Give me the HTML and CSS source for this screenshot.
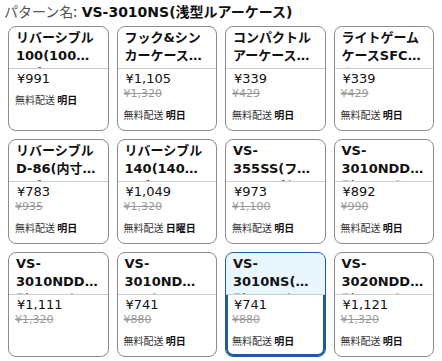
FILE: index.html
```html
<!DOCTYPE html>
<html lang="ja">
<head>
  <meta charset="UTF-8">
  <title>パターン選択</title>
  <link rel="stylesheet" href="styles.css">
</head>
<body>
  <div class="pattern-name">
    <span class="label">パターン名:</span>
    <span class="value">VS-3010NS(浅型ルアーケース)</span>
  </div>

  <div class="grid">
    <div class="card">
      <div class="card-title">リバーシブル100(100サイズ)</div>
      <div class="card-body">
        <div class="price">¥991</div>
        <div class="ship">無料配送 <b>明日</b></div>
      </div>
    </div>
    <div class="card">
      <div class="card-title">フック&amp;シンカーケースホワイト</div>
      <div class="card-body">
        <div class="price">¥1,105</div>
        <div class="list-price">¥1,320</div>
        <div class="ship">無料配送 <b>明日</b></div>
      </div>
    </div>
    <div class="card">
      <div class="card-title">コンパクトルアーケースホワイト</div>
      <div class="card-body">
        <div class="price">¥339</div>
        <div class="list-price">¥429</div>
        <div class="ship">無料配送 <b>明日</b></div>
      </div>
    </div>
    <div class="card">
      <div class="card-title">ライトゲームケースSFC ホワイト</div>
      <div class="card-body">
        <div class="price">¥339</div>
        <div class="list-price">¥429</div>
        <div class="ship">無料配送 <b>明日</b></div>
      </div>
    </div>

    <div class="card">
      <div class="card-title">リバーシブルD-86(内寸サイズ)</div>
      <div class="card-body">
        <div class="price">¥783</div>
        <div class="list-price">¥935</div>
        <div class="ship">無料配送 <b>明日</b></div>
      </div>
    </div>
    <div class="card">
      <div class="card-title">リバーシブル140(140サイズ)</div>
      <div class="card-body">
        <div class="price">¥1,049</div>
        <div class="list-price">¥1,320</div>
        <div class="ship">無料配送 <b>日曜日</b></div>
      </div>
    </div>
    <div class="card">
      <div class="card-title">VS-355SS(フィッシングケース)</div>
      <div class="card-body">
        <div class="price">¥973</div>
        <div class="list-price">¥1,100</div>
        <div class="ship">無料配送 <b>明日</b></div>
      </div>
    </div>
    <div class="card">
      <div class="card-title">VS-3010NDDM(深型ルアーケース)</div>
      <div class="card-body">
        <div class="price">¥892</div>
        <div class="list-price">¥990</div>
        <div class="ship">無料配送 <b>明日</b></div>
      </div>
    </div>

    <div class="card">
      <div class="card-title">VS-3010NDDM(深型ルアーケース)</div>
      <div class="card-body">
        <div class="price">¥1,111</div>
        <div class="list-price">¥1,320</div>
      </div>
    </div>
    <div class="card">
      <div class="card-title">VS-3010NDM(ルアーケース)</div>
      <div class="card-body">
        <div class="price">¥741</div>
        <div class="list-price">¥880</div>
        <div class="ship">無料配送 <b>明日</b></div>
      </div>
    </div>
    <div class="card selected">
      <div class="card-title">VS-3010NS(浅型ルアーケース)</div>
      <div class="card-body">
        <div class="price">¥741</div>
        <div class="list-price">¥880</div>
        <div class="ship">無料配送 <b>明日</b></div>
      </div>
    </div>
    <div class="card">
      <div class="card-title">VS-3020NDDM(深型ルアーケース)</div>
      <div class="card-body">
        <div class="price">¥1,121</div>
        <div class="list-price">¥1,320</div>
        <div class="ship">無料配送 <b>明日</b></div>
      </div>
    </div>
  </div>
</body>
</html>
```

FILE: styles.css
```css
body {
  margin: 0;
  padding: 0 4px;
  font-family: "DejaVu Sans", "Noto Sans CJK JP", sans-serif;
  color: #111;
  background-color: #fff;
}
.pattern-name {
  font-size: 14px;
  line-height: 22px;
  margin-bottom: 3px;
  white-space: nowrap;
}
.pattern-name .label {
  color: #555;
  font-family: "Noto Sans CJK JP", sans-serif;
}
.pattern-name .value {
  font-weight: bold;
}
.grid {
  display: grid;
  grid-template-columns: repeat(4, 1fr);
  column-gap: 8px;
  row-gap: 8px;
  padding: 0 4px;
}
.card {
  border: 1px solid #8c8c8c;
  border-radius: 8px;
  overflow: hidden;
  display: flex;
  flex-direction: column;
  height: 105px;
  box-sizing: border-box;
}
.card-title {
  padding: 2px 8px 3px 7px;
  border-bottom: 1px solid #ccc;
  font-size: 13px;
  font-weight: bold;
  line-height: 18px;
  height: 36px;
  display: -webkit-box;
  -webkit-box-orient: vertical;
  -webkit-line-clamp: 2;
  overflow: hidden;
}
.card-body {
  padding: 2px 6px 0;
}
.price {
  font-size: 13px;
  line-height: 15px;
  padding-left: 2px;
}
.list-price {
  font-size: 11px;
  line-height: 15px;
  color: #999;
  text-decoration: line-through;
}
.ship {
  margin-top: 7px;
  font-size: 10px;
  line-height: 14px;
  color: #333;
  font-family: "Noto Sans CJK JP", sans-serif;
}
.ship b {
  color: #111;
}
.selected {
  border-color: #1d5d9b;
  box-shadow: inset 0 0 0 2px #1d5d9b;
}
.selected .card-title {
  background-color: #eaf6fe;
}
```
